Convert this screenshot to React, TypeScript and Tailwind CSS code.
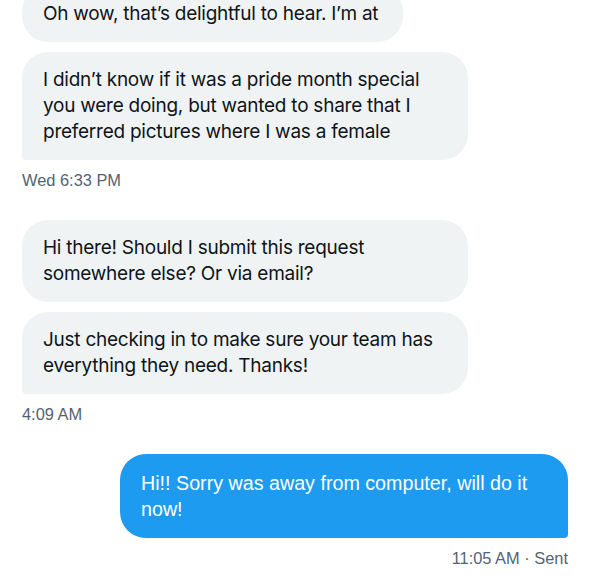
import React from "react";

function Gray({ lines, tail, fixed, extraRight }: { lines: string[]; tail?: boolean; fixed?: boolean; extraRight?: boolean }) {
  return (
    <div
      className={`bg-[#eff3f4] text-[#0f1419] text-[19px] leading-[26px] pl-[21px] ${extraRight ? "pr-[25px]" : "pr-[21px]"} py-[15px] rounded-[26px] ${tail ? "rounded-bl-[4px]" : ""} ${fixed ? "w-[446px]" : "w-fit"} font-['Inter',sans-serif] tracking-[-0.25px]`}
    >
      {lines.map((l, i) => (
        <div key={i} className="whitespace-nowrap">{l}</div>
      ))}
    </div>
  );
}

function Stamp({ children, right }: { children: React.ReactNode; right?: boolean }) {
  return (
    <div className={`mt-[10px] text-[16.4px] leading-[20px] text-[#536471] font-['Liberation_Sans',Arial,sans-serif] ${right ? "text-right" : ""}`}>
      {children}
    </div>
  );
}

export default function App() {
  return (
    <div className="w-[590px] h-[579px] overflow-hidden bg-white">
      <div className="px-[22px] -mt-[14px] flex flex-col">
        <Gray extraRight lines={["Oh wow, that\u2019s delightful to hear. I\u2019m at"]} />
        <div className="mt-[10px]">
          <Gray
            fixed
            tail
            lines={[
              "I didn\u2019t know if it was a pride month special",
              "you were doing, but wanted to share that I",
              "preferred pictures where I was a female",
            ]}
          />
        </div>
        <Stamp>Wed 6:33 PM</Stamp>
        <div className="mt-[30px]">
          <Gray fixed lines={["Hi there! Should I submit this request", "somewhere else? Or via email?"]} />
        </div>
        <div className="mt-[10px]">
          <Gray fixed tail lines={["Just checking in to make sure your team has", "everything they need. Thanks!"]} />
        </div>
        <Stamp>4:09 AM</Stamp>
        <div className="mt-[30px] flex justify-end">
          <div className="w-[448px] bg-[#1d9bf0] text-white text-[19.7px] leading-[26px] px-[21px] py-[16px] rounded-[26px] rounded-br-[4px] font-['Liberation_Sans',Arial,sans-serif]">
            <div className="whitespace-nowrap">Hi!! Sorry was away from computer, will do it</div>
            <div className="whitespace-nowrap">now!</div>
          </div>
        </div>
        <Stamp right>11:05 AM · Sent</Stamp>
      </div>
    </div>
  );
}
